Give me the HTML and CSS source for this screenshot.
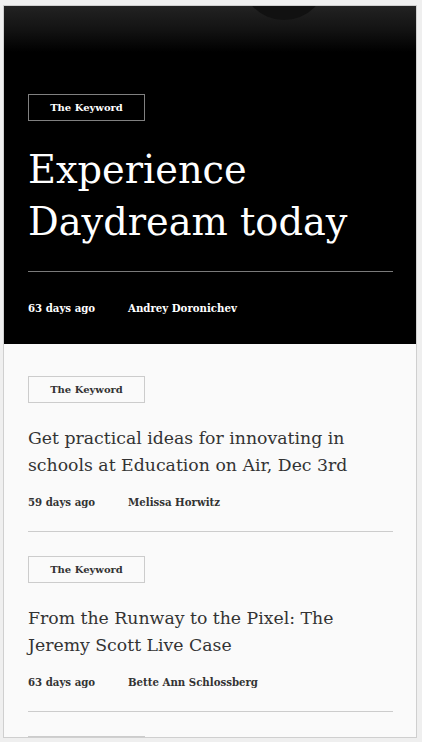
FILE: index.html
```html
<!DOCTYPE html>
<html lang="en">
<head>
<meta charset="utf-8">
<title>The Keyword</title>
<link rel="stylesheet" href="styles.css">
</head>
<body>
<div class="frame">
  <header class="hero">
    <div class="tag tag-dark">The Keyword</div>
    <h1 class="hero-title">Experience Daydream today</h1>
    <div class="hero-rule"></div>
    <div class="meta meta-dark"><span class="meta-date">63 days ago</span><span class="meta-author">Andrey Doronichev</span></div>
  </header>
  <main class="list">
    <article class="item">
      <div class="tag">The Keyword</div>
      <h2 class="item-title">Get practical ideas for innovating in schools at Education on Air, Dec 3rd</h2>
      <div class="meta"><span class="meta-date">59 days ago</span><span class="meta-author">Melissa Horwitz</span></div>
    </article>
    <article class="item">
      <div class="tag">The Keyword</div>
      <h2 class="item-title">From the Runway to the Pixel: The Jeremy Scott Live Case</h2>
      <div class="meta"><span class="meta-date">63 days ago</span><span class="meta-author">Bette Ann Schlossberg</span></div>
    </article>
    <article class="item">
      <div class="tag" aria-hidden="true"></div>
    </article>
  </main>
</div>
</body>
</html>
```
FILE: styles.css
```css
* { box-sizing: border-box; }
html, body { margin: 0; padding: 0; }
body {
  background: #efefef;
  font-family: "DejaVu Serif", serif;
  height: 742px;
  overflow: hidden;
}
.frame {
  margin: 5px 0 0 3px;
  width: 414px;
  height: 733px;
  border: 1px solid #cfcfcf;
  background: #fafafa;
  overflow: hidden;
}
.hero {
  position: relative;
  background: linear-gradient(#222 0, #141414 22px, #000 46px, #000 100%);
  padding: 88px 23px 28px 24px;
  color: #fff;
  overflow: hidden;
}
.hero::before {
  content: "";
  position: absolute;
  left: 237px;
  top: -72px;
  width: 86px;
  height: 86px;
  border-radius: 50%;
  background: #111;
}
.tag {
  position: relative;
  width: 117px;
  height: 27px;
  border: 1px solid #cccccc;
  display: flex;
  align-items: center;
  justify-content: center;
  font-weight: bold;
  font-size: 10px;
  color: #333;
}
.tag-dark {
  border-color: #808080;
  color: #fff;
}
.hero-title {
  position: relative;
  margin: 23px 0 0;
  font-weight: normal;
  font-size: 38.3px;
  line-height: 52px;
}
.hero-rule {
  height: 1px;
  background: #7a7a7a;
  margin-top: 23px;
}
.meta {
  display: flex;
  font-weight: bold;
  font-size: 10.2px;
  line-height: 16px;
  color: #333;
  margin-top: 15px;
}
.meta-dark {
  color: #fff;
  margin-top: 28px;
}
.meta-date { width: 100px; flex: none; }
.list {
  padding: 32px 23px 0 24px;
}
.item {
  padding-bottom: 21px;
  border-bottom: 1px solid #cccccc;
  margin-bottom: 24px;
}
.item-title {
  margin: 22px 0 0;
  font-weight: normal;
  font-size: 17.3px;
  line-height: 27px;
  color: #333;
}
```
